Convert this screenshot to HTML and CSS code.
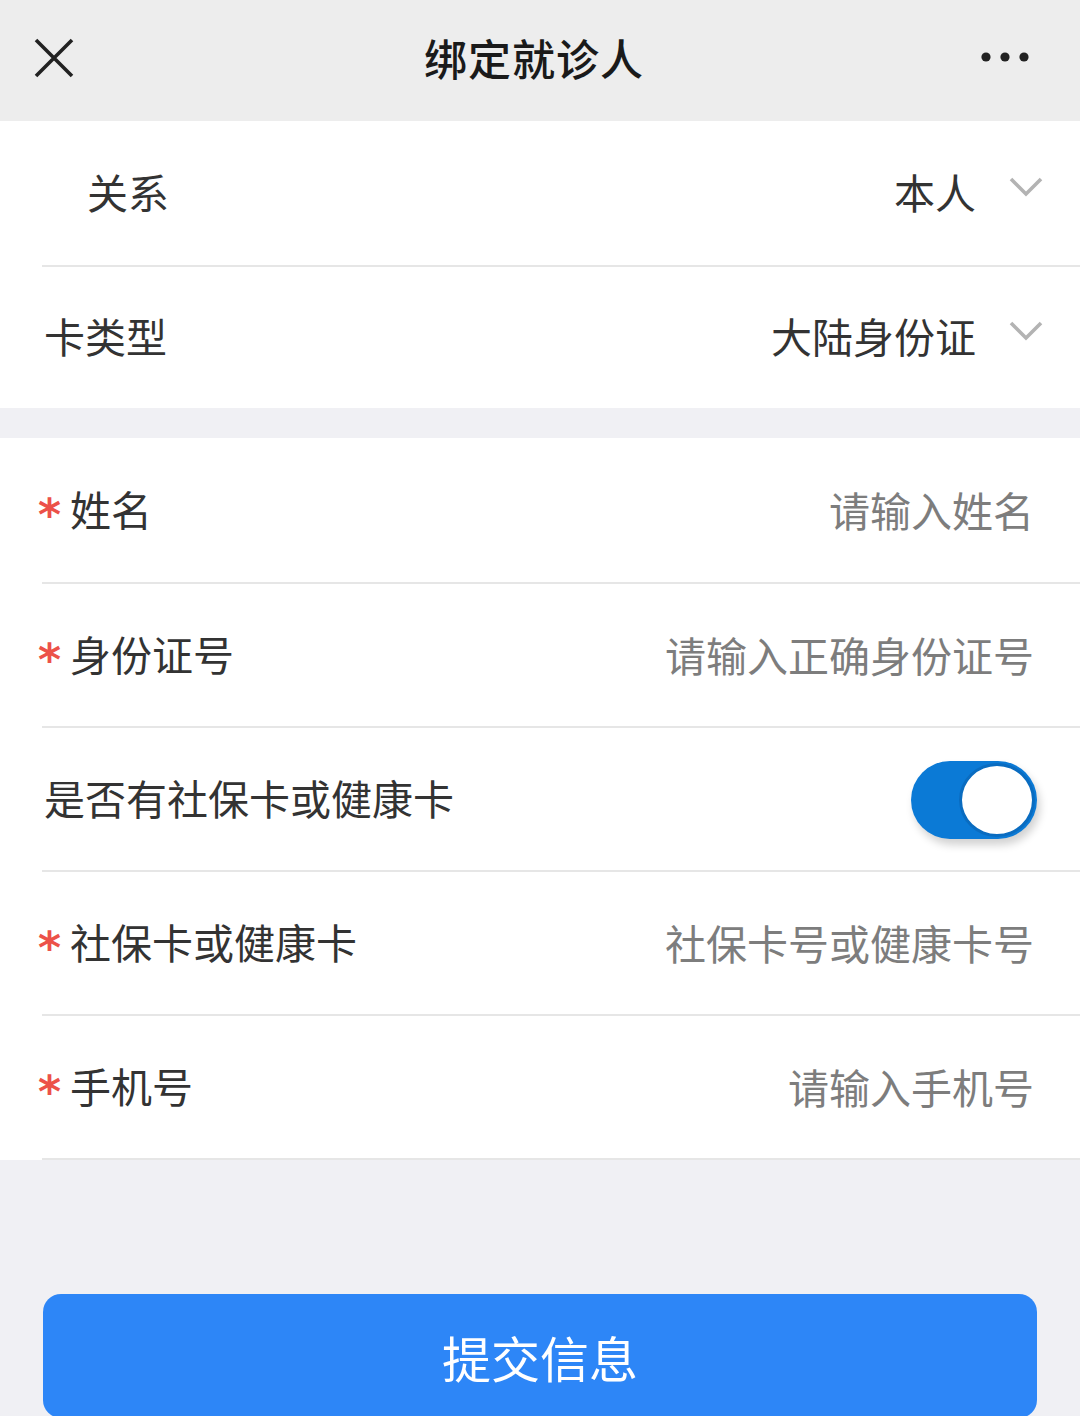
FILE: index.html
```html
<!DOCTYPE html>
<html lang="zh-CN">
<head>
<meta charset="UTF-8">
<meta name="viewport" content="width=device-width, initial-scale=1.0">
<title>绑定就诊人</title>
<link rel="stylesheet" href="styles.css">
</head>
<body>

<div class="topbar">
    <svg class="close" width="40" height="40" viewBox="0 0 40 40">
        <path d="M2 2 L38 38 M38 2 L2 38" stroke="#222" stroke-width="3.6" fill="none"/>
    </svg>
    <div class="title">绑定就诊人</div>
    <svg class="more" width="50" height="12" viewBox="0 0 50 12">
        <circle cx="6" cy="6" r="4.6" fill="#222"/>
        <circle cx="25" cy="6" r="4.6" fill="#222"/>
        <circle cx="44" cy="6" r="4.6" fill="#222"/>
    </svg>
</div>

<div class="group">
    <div class="row first">
        <div class="label indent">关系</div>
        <div class="picker">
            <span class="value">本人</span>
            <svg class="arrow" width="34" height="20" viewBox="0 0 34 20">
                <path d="M2 2 L17 17 L32 2" stroke="#b3b3b3" stroke-width="3.6" fill="none"/>
            </svg>
        </div>
    </div>
    <div class="row last">
        <div class="label">卡类型</div>
        <div class="picker">
            <span class="value">大陆身份证</span>
            <svg class="arrow" width="34" height="20" viewBox="0 0 34 20">
                <path d="M2 2 L17 17 L32 2" stroke="#b3b3b3" stroke-width="3.6" fill="none"/>
            </svg>
        </div>
    </div>
</div>

<div class="group second">
    <div class="row top">
        <div class="label"><span class="star">*</span>姓名</div>
        <div class="placeholder">请输入姓名</div>
    </div>
    <div class="row">
        <div class="label"><span class="star">*</span>身份证号</div>
        <div class="placeholder">请输入正确身份证号</div>
    </div>
    <div class="row">
        <div class="label">是否有社保卡或健康卡</div>
        <div class="switch"><div class="knob"></div></div>
    </div>
    <div class="row">
        <div class="label"><span class="star">*</span>社保卡或健康卡</div>
        <div class="placeholder">社保卡号或健康卡号</div>
    </div>
    <div class="row">
        <div class="label"><span class="star">*</span>手机号</div>
        <div class="placeholder">请输入手机号</div>
    </div>
</div>

<button class="submit">提交信息</button>

</body>
</html>
```

FILE: styles.css
```css
body {
    font-family: "Noto Sans CJK SC", "Noto Sans", sans-serif;
    background-color: #f0f0f4;
    margin: 0;
    padding: 0;
    color: #333;
}

.topbar {
    height: 121px;
    background-color: #ededed;
    display: flex;
    align-items: center;
    justify-content: space-between;
    padding: 0 50px 0 34px;
    box-sizing: border-box;
}

.close {
    margin-top: -6px;
}

.title {
    font-size: 43px;
    font-weight: 500;
    color: #1a1a1a;
    margin-left: 14px;
    margin-top: -8px;
    letter-spacing: 1px;
}

.more {
    margin-top: -8px;
}

.group {
    background-color: #fff;
}

.second {
    margin-top: 30px;
}

.row {
    height: 144px;
    display: flex;
    align-items: center;
    justify-content: space-between;
    padding: 0 46px 0 38px;
    box-sizing: border-box;
    font-size: 41px;
    background: linear-gradient(#e6e6e6, #e6e6e6) no-repeat 42px 100% / calc(100% - 42px) 2px;
}

.row.first {
    height: 146px;
    padding-right: 37px;
}

.row.last {
    height: 141px;
    background: none;
    padding-right: 37px;
}

.row.top {
    height: 146px;
}

.label {
    display: flex;
    align-items: center;
    padding-left: 6px;
    margin-top: -6px;
}

.label.indent {
    padding-left: 49px;
}

.star {
    color: #ec5149;
    font-family: "DejaVu Sans", sans-serif;
    font-weight: bold;
    font-size: 44px;
    line-height: 1;
    margin-left: -6px;
    margin-right: 6px;
    padding-top: 14px;
    width: 26px;
}

.picker {
    display: flex;
    align-items: center;
    gap: 33px;
}

.value {
    color: #333;
    margin-top: -6px;
}

.arrow {
    margin-top: -14px;
}

.placeholder {
    color: #7d7d7d;
    margin-top: -4px;
}

.switch {
    width: 126px;
    height: 78px;
    border-radius: 39px;
    background-color: #0b7ad6;
    display: flex;
    align-items: center;
    justify-content: flex-end;
    padding: 2px;
    box-sizing: border-box;
    margin-right: -3px;
    box-shadow: 3px 6px 8px rgba(0, 0, 0, 0.18);
}

.knob {
    width: 76px;
    height: 74px;
    border-radius: 50%;
    background-color: #fff;
    border: 3px solid #0a6cc0;
    box-sizing: border-box;
}

.submit {
    display: block;
    width: calc(100% - 86px);
    height: 124px;
    margin: 134px 43px 0;
    background-color: #2d86f7;
    color: #fff;
    border: none;
    border-radius: 18px;
    font-family: "Noto Sans CJK SC", sans-serif;
    font-size: 49px;
    cursor: pointer;
}
```
